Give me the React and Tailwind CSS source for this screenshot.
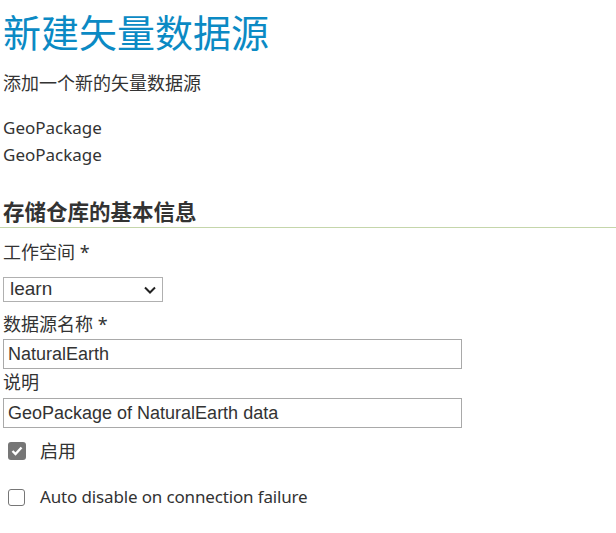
import React from "react";

export default function App() {
  return (
    <div className="bg-white text-[#333] w-[616px] h-[533px] overflow-hidden px-[3px] font-['Noto_Sans','Noto_Sans_CJK_SC',sans-serif]">
      <h1 className="text-[38px] leading-[44px] pt-[10px] text-[#0b8ac4]">新建矢量数据源</h1>
      <p className="text-[18px] leading-[24px] mt-[17px]">添加一个新的矢量数据源</p>

      <div className="mt-[19px] text-[17px] leading-[27px]">
        <div>GeoPackage</div>
        <div>GeoPackage</div>
      </div>

      <h2 className="mt-[30px] text-[21.5px] font-bold leading-[28px] border-b border-[#c5d6ab] -mx-[3px] px-[3px] pb-[1px]">
        存储仓库的基本信息
      </h2>

      <div className="mt-[11px] text-[18px]">
        <label className="block leading-[26px]">工作空间 *</label>
        <div className="mt-[12px] relative w-[160px] h-[25px] border border-[#b0b0b0] flex items-center font-['Liberation_Sans',sans-serif] text-[19px]">
          <span className="pl-[6px]">learn</span>
          <svg className="absolute right-[5px] top-[7px]" width="14" height="10" viewBox="0 0 14 10" fill="none" stroke="#222" strokeWidth="2">
            <path d="M2 2.5 L7 7.5 L12 2.5" />
          </svg>
        </div>

        <label className="block mt-[9px] leading-[26px]">数据源名称 *</label>
        <div className="mt-[2px] w-[459px] h-[30px] border border-[#a9a9a9] flex items-center pl-[4px] font-['Liberation_Sans',sans-serif] text-[18px]">
          NaturalEarth
        </div>

        <label className="block leading-[26px]">说明</label>
        <div className="mt-[3px] w-[459px] h-[30px] border border-[#a9a9a9] flex items-center pl-[4px] font-['Liberation_Sans',sans-serif] text-[18px]">
          GeoPackage of NaturalEarth data
        </div>

        <div className="mt-[13px] flex items-center h-[20px]">
          <span className="ml-[5px] w-[18px] h-[18px] rounded-[3px] bg-[#767676] flex items-center justify-center">
            <svg width="12" height="10" viewBox="0 0 12 10" fill="none" stroke="#fff" strokeWidth="2.4">
              <path d="M1.5 5 L4.5 8 L10.5 1.5" />
            </svg>
          </span>
          <span className="ml-[14px]">启用</span>
        </div>

        <div className="mt-[26px] flex items-center h-[20px]">
          <span className="ml-[5px] w-[17px] h-[17px] rounded-[3px] border border-[#767676] bg-white"></span>
          <span className="ml-[15px] text-[17px] tracking-[-0.15px]">Auto disable on connection failure</span>
        </div>
      </div>
    </div>
  );
}
